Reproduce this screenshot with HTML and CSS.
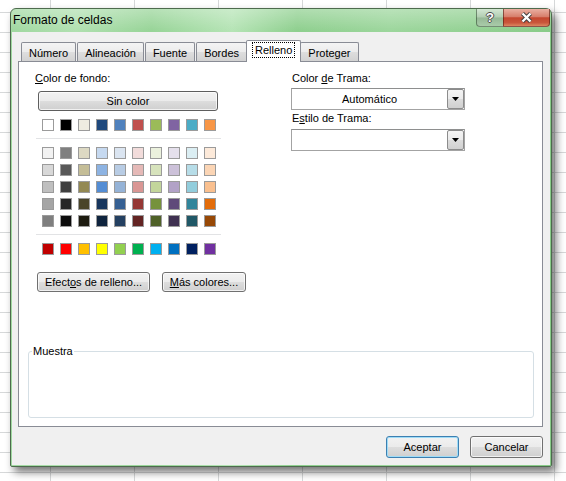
FILE: index.html
```html
<!DOCTYPE html>
<html lang="es">
<head>
    <meta charset="utf-8">
    <title>Formato de celdas</title>
    <link rel="stylesheet" href="styles.css">
</head>
<body>

<div class="window">

    <div class="titleBar">
        <div class="titleText">Formato de celdas</div>
        <div class="helpButton">?</div>
        <div class="closeButton">
            <svg width="13" height="11" viewBox="0 0 13 11">
                <path d="M2.5 1.5 L10.5 9.5 M10.5 1.5 L2.5 9.5" stroke="#3d3d3d" stroke-width="4.2" fill="none"/>
                <path d="M2.5 1.5 L10.5 9.5 M10.5 1.5 L2.5 9.5" stroke="#fff" stroke-width="2.4" fill="none"/>
            </svg>
        </div>
    </div>

    <div class="dialogBody">

        <div class="tabStrip">
            <div class="tab">Número</div>
            <div class="tab">Alineación</div>
            <div class="tab">Fuente</div>
            <div class="tab">Bordes</div>
            <div class="tab selectedTab"><span class="focusRect">Relleno</span></div>
            <div class="tab">Proteger</div>
        </div>

        <div class="tabPanel">

            <div class="panelTop">

                <div class="leftColumn">
                    <div class="label"><u>C</u>olor de fondo:</div>
                    <div class="button wideButton">Sin color</div>

                    <div class="swatchRow">
                        <div class="swatch" style="background:#ffffff"></div>
                        <div class="swatch" style="background:#000000"></div>
                        <div class="swatch" style="background:#eeece1"></div>
                        <div class="swatch" style="background:#1f497d"></div>
                        <div class="swatch" style="background:#4f81bd"></div>
                        <div class="swatch" style="background:#c0504d"></div>
                        <div class="swatch" style="background:#9bbb59"></div>
                        <div class="swatch" style="background:#8064a2"></div>
                        <div class="swatch" style="background:#4bacc6"></div>
                        <div class="swatch" style="background:#f79646"></div>
                    </div>

                    <div class="separator"></div>

                    <div class="swatchGrid">
                        <div class="swatch" style="background:#f2f2f2"></div>
                        <div class="swatch" style="background:#7f7f7f"></div>
                        <div class="swatch" style="background:#ddd9c3"></div>
                        <div class="swatch" style="background:#c6d9f0"></div>
                        <div class="swatch" style="background:#dbe5f1"></div>
                        <div class="swatch" style="background:#f2dcdb"></div>
                        <div class="swatch" style="background:#ebf1dd"></div>
                        <div class="swatch" style="background:#e5e0ec"></div>
                        <div class="swatch" style="background:#dbeef3"></div>
                        <div class="swatch" style="background:#fdeada"></div>

                        <div class="swatch" style="background:#d8d8d8"></div>
                        <div class="swatch" style="background:#595959"></div>
                        <div class="swatch" style="background:#c4bd97"></div>
                        <div class="swatch" style="background:#8db3e2"></div>
                        <div class="swatch" style="background:#b8cce4"></div>
                        <div class="swatch" style="background:#e5b9b7"></div>
                        <div class="swatch" style="background:#d7e3bc"></div>
                        <div class="swatch" style="background:#ccc1d9"></div>
                        <div class="swatch" style="background:#b7dde8"></div>
                        <div class="swatch" style="background:#fbd5b5"></div>

                        <div class="swatch" style="background:#bfbfbf"></div>
                        <div class="swatch" style="background:#3f3f3f"></div>
                        <div class="swatch" style="background:#938953"></div>
                        <div class="swatch" style="background:#548dd4"></div>
                        <div class="swatch" style="background:#95b3d7"></div>
                        <div class="swatch" style="background:#d99694"></div>
                        <div class="swatch" style="background:#c3d69b"></div>
                        <div class="swatch" style="background:#b2a2c7"></div>
                        <div class="swatch" style="background:#92cddc"></div>
                        <div class="swatch" style="background:#fac08f"></div>

                        <div class="swatch" style="background:#a5a5a5"></div>
                        <div class="swatch" style="background:#262626"></div>
                        <div class="swatch" style="background:#494429"></div>
                        <div class="swatch" style="background:#17365d"></div>
                        <div class="swatch" style="background:#366092"></div>
                        <div class="swatch" style="background:#953734"></div>
                        <div class="swatch" style="background:#76923c"></div>
                        <div class="swatch" style="background:#5f497a"></div>
                        <div class="swatch" style="background:#31859b"></div>
                        <div class="swatch" style="background:#e36c09"></div>

                        <div class="swatch" style="background:#7f7f7f"></div>
                        <div class="swatch" style="background:#0c0c0c"></div>
                        <div class="swatch" style="background:#1d1b10"></div>
                        <div class="swatch" style="background:#0f243e"></div>
                        <div class="swatch" style="background:#244061"></div>
                        <div class="swatch" style="background:#632423"></div>
                        <div class="swatch" style="background:#4f6128"></div>
                        <div class="swatch" style="background:#3f3151"></div>
                        <div class="swatch" style="background:#205867"></div>
                        <div class="swatch" style="background:#974806"></div>
                    </div>

                    <div class="separator"></div>

                    <div class="swatchRow">
                        <div class="swatch" style="background:#c00000"></div>
                        <div class="swatch" style="background:#ff0000"></div>
                        <div class="swatch" style="background:#ffc000"></div>
                        <div class="swatch" style="background:#ffff00"></div>
                        <div class="swatch" style="background:#92d050"></div>
                        <div class="swatch" style="background:#00b050"></div>
                        <div class="swatch" style="background:#00b0f0"></div>
                        <div class="swatch" style="background:#0070c0"></div>
                        <div class="swatch" style="background:#002060"></div>
                        <div class="swatch" style="background:#7030a0"></div>
                    </div>

                    <div class="buttonRow">
                        <div class="button effectsButton">Efect<u>o</u>s de relleno...</div>
                        <div class="button moreButton"><u>M</u>ás colores...</div>
                    </div>
                </div>

                <div class="rightColumn">
                    <div class="label rightLabel">Color <u>d</u>e Trama:</div>
                    <div class="combo">
                        <div class="comboText">Automático</div>
                        <div class="comboArrow">
                            <svg width="7" height="4" viewBox="0 0 7 4"><polygon points="0,0 7,0 3.5,4" fill="#000"/></svg>
                        </div>
                    </div>
                    <div class="label rightLabel secondLabel">E<u>s</u>tilo de Trama:</div>
                    <div class="combo secondCombo">
                        <div class="comboText"></div>
                        <div class="comboArrow">
                            <svg width="7" height="4" viewBox="0 0 7 4"><polygon points="0,0 7,0 3.5,4" fill="#000"/></svg>
                        </div>
                    </div>
                </div>

            </div>

            <fieldset class="sample">
                <legend>Muestra</legend>
            </fieldset>

        </div>

        <div class="footer">
            <div class="button footerButton defaultButton">Aceptar</div>
            <div class="button footerButton">Cancelar</div>
        </div>

    </div>

</div>

</body>
</html>
```

FILE: styles.css
```css
body
    {
        margin:           0px;
        width:            566px;
        height:           481px;
        overflow:         hidden;
        background-color: #fff;
        background-image: linear-gradient(to right, #d6d8d9 1px, transparent 1px),
                          linear-gradient(to bottom, #d6d8d9 1px, transparent 1px);
        background-size:  84px 20px;
        background-position: 50px 12px;
        font-family:      "Liberation Sans", Arial, sans-serif;
        font-size:        11px;
        color:            #000;
    }

.window
    {
        margin:           8px 0px 0px 10px;
        width:            542px;
        height:           459px;
        box-sizing:       border-box;
        border:           1px solid #4d6b4d;
        border-radius:    6px 6px 2px 2px;
        padding:          0px 1px 1px 1px;
        display:          flex;
        flex-direction:   column;
        background:       linear-gradient(to bottom, rgba(255,255,255,0.3) 0px, rgba(255,255,255,0) 22px),
                          linear-gradient(to right, #a0d8a0 0%, #b0e0b0 12%, #97d497 26%, #b5e4b5 41%, #8ecf8e 53%, #9cd69c 70%, #93d193 86%, #88cb88 100%);
        box-shadow:       4px 5px 8px rgba(0,0,0,0.55);
    }

/* title bar */

.titleBar
    {
        height:           23px;
        display:          flex;
        align-items:      flex-start;
    }

.titleText
    {
        flex:             1;
        padding-left:     1px;
        line-height:      23px;
        font-size:        12px;
    }

.helpButton
    {
        width:            27px;
        height:           18px;
        box-sizing:       border-box;
        border:           1px solid rgba(40,70,40,0.55);
        border-top:       none;
        border-right:     none;
        border-radius:    0px 0px 0px 4px;
        background:       linear-gradient(to bottom, #d3e7d3 0%, #b1cdb1 48%, #96b896 52%, #a9cba9 100%);
        color:            #fff;
        font-weight:      bold;
        font-size:        13px;
        line-height:      17px;
        text-align:       center;
        text-shadow:      1px 0 0 #4a4a4a, -1px 0 0 #4a4a4a, 0 1px 0 #4a4a4a, 0 -1px 0 #4a4a4a;
    }

.closeButton
    {
        width:            47px;
        height:           18px;
        box-sizing:       border-box;
        border:           1px solid rgba(80,25,15,0.6);
        border-top:       none;
        border-radius:    0px 0px 4px 0px;
        background:       linear-gradient(to bottom, #eab0a2 0%, #d77f6c 45%, #c4472f 52%, #c9563b 80%, #dc8660 100%);
        display:          flex;
        align-items:      center;
        justify-content:  center;
    }

/* dialog body */

.dialogBody
    {
        flex:             1;
        background-color: #f0f0f0;
        padding:          8px 7px 7px 6px;
        display:          flex;
        flex-direction:   column;
    }

.tabStrip
    {
        height:           21px;
        display:          flex;
        align-items:      flex-end;
        padding-left:     3px;
    }

.tab
    {
        height:           19px;
        box-sizing:       border-box;
        border:           1px solid #898c95;
        border-bottom:    none;
        border-radius:    2px 2px 0px 0px;
        padding:          2px 7px 0px 7px;
        margin-right:     1px;
        line-height:      16px;
        background:       linear-gradient(to bottom, #f4f4f4 0%, #ececec 50%, #dedede 51%, #d2d2d2 100%);
    }

.selectedTab
    {
        height:           22px;
        margin-bottom:    -1px;
        margin-left:      -2px;
        margin-right:     -1px;
        padding:          1px 5px 0px 5px;
        background:       #fff;
        position:         relative;
        z-index:          1;
    }

.focusRect
    {
        display:          inline-block;
        border:           1px dotted #000;
        line-height:      14px;
        padding:          0px 2px;
    }

.tabPanel
    {
        flex:             1;
        background-color: #fff;
        border:           1px solid #898c95;
        display:          flex;
        flex-direction:   column;
    }

.panelTop
    {
        display:          flex;
        padding:          9px 0px 0px 16px;
    }

.leftColumn
    {
        width:            256px;
    }

.rightColumn
    {
        width:            174px;
    }

.label
    {
        height:           14px;
        line-height:      14px;
    }

.rightLabel
    {
        margin-left:      1px;
    }

.secondLabel
    {
        margin-top:       1px;
    }

/* buttons */

.button
    {
        box-sizing:       border-box;
        height:           20px;
        border:           1px solid #707070;
        border-radius:    3px;
        background:       linear-gradient(to bottom, #f2f2f2 0%, #ebebeb 50%, #dddddd 51%, #cfcfcf 100%);
        box-shadow:       inset 0 0 0 1px rgba(255,255,255,0.7);
        display:          flex;
        align-items:      center;
        justify-content:  center;
    }

.wideButton
    {
        width:            180px;
        margin:           6px 0px 0px 3px;
        border-color:     #5e5e5e;
    }

.buttonRow
    {
        display:          flex;
        gap:              12px;
        margin:           17px 0px 0px 2px;
    }

.effectsButton
    {
        width:            113px;
    }

.moreButton
    {
        width:            84px;
    }

/* colour swatches */

.swatchRow
    {
        display:          flex;
        gap:              6px;
        margin:           8px 0px 0px 7px;
    }

.swatchGrid
    {
        display:          grid;
        grid-template-columns: repeat(10, 12px);
        column-gap:       6px;
        row-gap:          5px;
        margin:           8px 0px 0px 7px;
    }

.swatch
    {
        width:            12px;
        height:           12px;
        box-sizing:       border-box;
        border:           1px solid #9b9b9b;
    }

.separator
    {
        width:            185px;
        height:           1px;
        margin:           7px 0px 0px 1px;
        background-color: #e2e3e5;
    }

/* combo boxes */

.combo
    {
        height:           22px;
        box-sizing:       border-box;
        margin-top:       3px;
        border:           1px solid #a3a3a3;
        border-top-color: #8e8f8f;
        background-color: #fff;
        display:          flex;
    }

.secondCombo
    {
        margin-top:       4px;
    }

.comboText
    {
        flex:             1;
        text-align:       center;
        line-height:      20px;
    }

.comboArrow
    {
        width:            17px;
        box-sizing:       border-box;
        border:           1px solid #8c8c8c;
        border-radius:    2px;
        background:       linear-gradient(to bottom, #f4f4f4 0%, #ebebeb 50%, #dcdcdc 51%, #d0d0d0 100%);
        display:          flex;
        align-items:      center;
        justify-content:  center;
    }

/* sample box */

.sample
    {
        margin:           auto 8px 8px 9px;
        padding:          0px 3px;
        height:           71px;
        border:           1px solid #d5dfe5;
        border-radius:    3px;
        min-inline-size:  0;
    }

.sample legend
    {
        padding:          0px 1px;
        line-height:      13px;
    }

/* footer */

.footer
    {
        display:          flex;
        justify-content:  flex-end;
        gap:              11px;
        margin-top:       9px;
    }

.footerButton
    {
        width:            73px;
        height:           22px;
    }

.defaultButton
    {
        border-color:     #3c7fb1;
        box-shadow:       inset 0 0 0 1px #9fdcf7;
    }
```
